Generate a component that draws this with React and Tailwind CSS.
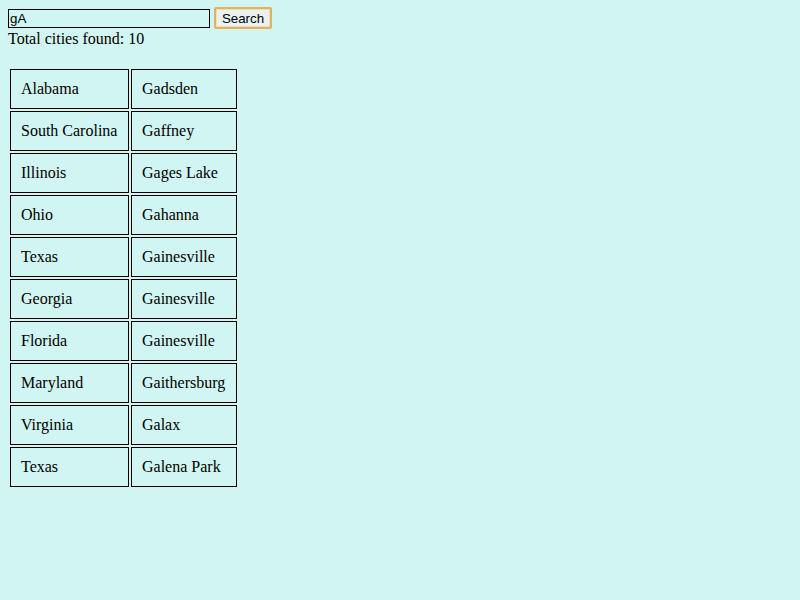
import React from "react";

const rows = [
  ["Alabama", "Gadsden"],
  ["South Carolina", "Gaffney"],
  ["Illinois", "Gages Lake"],
  ["Ohio", "Gahanna"],
  ["Texas", "Gainesville"],
  ["Georgia", "Gainesville"],
  ["Florida", "Gainesville"],
  ["Maryland", "Gaithersburg"],
  ["Virginia", "Galax"],
  ["Texas", "Galena Park"],
];

export default function App() {
  return (
    <div className="min-h-[600px] w-full bg-[#d1f5f2] p-2 text-black text-[16px] leading-[18px] font-['Liberation_Serif',serif]">
      <div className="flex items-center h-[22px] -mt-[1px]">
        <input
          defaultValue="gA"
          className="w-[202px] h-[19px] border border-black bg-transparent p-0 pl-[1px] text-[13.33px] leading-[15px] font-['Liberation_Sans',Arial,sans-serif] outline-none"
        />
        <button className="ml-[4px] w-[58px] h-[22px] pt-[1px] border-2 border-[#e0b262] rounded-[2px] bg-[#e8f2f1] text-[13.33px] font-['Liberation_Sans',Arial,sans-serif] shadow-[inset_0_0_0_1px_#f3ddb0] flex items-center justify-center">
          Search
        </button>
      </div>
      <div className="h-[18px] mt-[1px]">Total cities found: 10</div>
      <table className="mt-[19px] border-separate border-spacing-[2px]">
        <tbody>
          {rows.map(([s, c], i) => (
            <tr key={i}>
              <td className="border border-black px-[10px] py-[10px] h-[40px] w-[119px] whitespace-nowrap">{s}</td>
              <td className="border border-black px-[10px] py-[10px] h-[40px] w-[106px] whitespace-nowrap">{c}</td>
            </tr>
          ))}
        </tbody>
      </table>
    </div>
  );
}
